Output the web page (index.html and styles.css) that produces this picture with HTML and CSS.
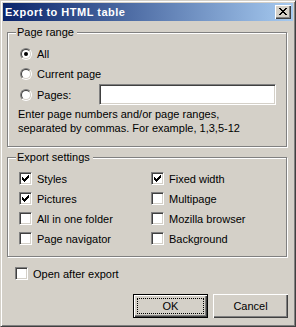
FILE: index.html
```
<!DOCTYPE html>
<html>
<head>
<meta charset="utf-8">
<link rel="stylesheet" href="styles.css">
</head>
<body>
<div class="window">
  <div class="titlebar">
    <span class="title">Export to HTML table</span>
    <span class="close-btn"><svg class="x-glyph" width="8" height="7" viewBox="0 0 8 7" shape-rendering="crispEdges"><path d="M0 0h2v1H0zM6 0h2v1H6zM1 1h2v1H1zM5 1h2v1H5zM2 2h4v1H2zM3 3h2v1H3zM2 4h4v1H2zM1 5h2v1H1zM5 5h2v1H5zM0 6h2v1H0zM6 6h2v1H6z"/></svg></span>
  </div>
  <div class="content">
    <fieldset class="group group-range">
      <legend>Page range</legend>
      <div class="range-body">
        <div class="opt"><span class="radio"><span class="ring"><span class="dot"></span></span></span><span>All</span></div>
        <div class="opt"><span class="radio"><span class="ring"></span></span><span>Current page</span></div>
        <div class="opt opt-pages"><span class="radio"><span class="ring"></span></span><span class="pages-label">Pages:</span><span class="input"></span></div>
        <p class="hint">Enter page numbers and/or page ranges,<br>separated by commas. For example, 1,3,5-12</p>
      </div>
    </fieldset>
    <fieldset class="group group-settings">
      <legend>Export settings</legend>
      <div class="settings-body">
        <div class="chk-item"><span class="check"><svg class="tick" width="9" height="9" viewBox="0 0 9 9" shape-rendering="crispEdges"><path d="M1 3h1v3H1zM2 4h1v3H2zM3 5h1v3H3zM4 4h1v3H4zM5 3h1v3H5zM6 2h1v3H6zM7 1h1v3H7z"/></svg></span><span>Styles</span></div>
        <div class="chk-item"><span class="check"><svg class="tick" width="9" height="9" viewBox="0 0 9 9" shape-rendering="crispEdges"><path d="M1 3h1v3H1zM2 4h1v3H2zM3 5h1v3H3zM4 4h1v3H4zM5 3h1v3H5zM6 2h1v3H6zM7 1h1v3H7z"/></svg></span><span>Fixed width</span></div>
        <div class="chk-item"><span class="check"><svg class="tick" width="9" height="9" viewBox="0 0 9 9" shape-rendering="crispEdges"><path d="M1 3h1v3H1zM2 4h1v3H2zM3 5h1v3H3zM4 4h1v3H4zM5 3h1v3H5zM6 2h1v3H6zM7 1h1v3H7z"/></svg></span><span>Pictures</span></div>
        <div class="chk-item"><span class="check"></span><span>Multipage</span></div>
        <div class="chk-item"><span class="check"></span><span>All in one folder</span></div>
        <div class="chk-item"><span class="check"></span><span>Mozilla browser</span></div>
        <div class="chk-item"><span class="check"></span><span>Page navigator</span></div>
        <div class="chk-item"><span class="check"></span><span>Background</span></div>
      </div>
    </fieldset>
    <div class="chk-item open-row"><span class="check"></span><span>Open after export</span></div>
    <div class="buttons">
      <button class="btn btn-default"><span class="focus">OK</span></button>
      <button class="btn">Cancel</button>
    </div>
  </div>
</div>
</body>
</html>
```
FILE: styles.css
```
html, body {
  margin: 0;
  padding: 0;
  background: #d4d0c8;
}
body {
  font-family: "Liberation Sans", Arial, sans-serif;
  font-size: 11px;
  color: #000;
}
.window {
  width: 296px;
  height: 327px;
  box-sizing: border-box;
  background: #d4d0c8;
  border: 1px solid;
  border-color: #d4d0c8 #404040 #404040 #d4d0c8;
  box-shadow: inset 1px 1px #fff, inset -1px -1px #808080;
  padding: 2px;
  display: flex;
  flex-direction: column;
}
.titlebar {
  height: 18px;
  flex: none;
  background: linear-gradient(to right, #0a246a, #a6caf0);
  display: flex;
  align-items: center;
  padding: 0 2px;
}
.title {
  flex: 1;
  color: #fff;
  font-weight: bold;
  letter-spacing: 0.5px;
  line-height: 18px;
  white-space: nowrap;
}
.close-btn {
  width: 16px;
  height: 14px;
  box-sizing: border-box;
  background: #d4d0c8;
  box-shadow: inset 1px 1px #fff, inset -1px -1px #404040, inset -2px -2px #808080;
  padding: 3px 0 0 4px;
}
.x-glyph {
  display: block;
  fill: #000;
}
.content {
  flex: 1;
  display: flex;
  flex-direction: column;
  padding: 0 5px 0 4px;
}
.group {
  margin: 5px 1px 0 0;
  padding: 0;
  min-width: 0;
  border: 1px solid #808080;
  box-shadow: inset 1px 1px #fff, 1px 1px #fff;
}
.group-settings {
  margin-top: 4px;
}
legend {
  margin-left: 8px;
  padding: 0 3px 0 1px;
  line-height: 13px;
  background: #d4d0c8;
}
.range-body {
  padding: 5px 0 11px 12px;
}
.opt {
  display: flex;
  align-items: center;
  height: 20px;
}
.opt-pages {
  height: 21px;
}
.radio {
  width: 12px;
  height: 12px;
  box-sizing: border-box;
  flex: none;
  border-radius: 50%;
  border: 1px solid;
  border-color: #808080 #fff #fff #808080;
  margin-right: 5px;
}
.ring {
  display: flex;
  align-items: center;
  justify-content: center;
  width: 100%;
  height: 100%;
  box-sizing: border-box;
  border-radius: 50%;
  border: 1px solid;
  border-color: #404040 #d4d0c8 #d4d0c8 #404040;
  background: #fff;
}
.dot {
  width: 4px;
  height: 4px;
  border-radius: 50%;
  background: #000;
}
.pages-label {
  width: 62px;
}
.input {
  width: 177px;
  height: 21px;
  box-sizing: border-box;
  background: #fff;
  border: 1px solid;
  border-color: #808080 #fff #fff #808080;
  box-shadow: inset 1px 1px #404040, inset -1px -1px #d4d0c8;
}
.hint {
  margin: 2px 0 0 -2px;
  line-height: 14px;
}
.settings-body {
  padding: 8px 0 11px 11px;
  display: grid;
  grid-template-columns: 132px 1fr;
  row-gap: 7px;
}
.chk-item {
  display: flex;
  align-items: center;
  height: 13px;
  white-space: nowrap;
}
.check {
  width: 13px;
  height: 13px;
  box-sizing: border-box;
  flex: none;
  background: #fff;
  border: 1px solid;
  border-color: #808080 #fff #fff #808080;
  box-shadow: inset 1px 1px #404040, inset -1px -1px #d4d0c8;
  padding: 1px;
  margin-right: 5px;
}
.tick {
  display: block;
  fill: #000;
}
.open-row {
  margin: 10px 0 0 8px;
}
.buttons {
  display: flex;
  justify-content: flex-end;
  gap: 5px;
  margin-top: 14px;
}
.btn {
  width: 75px;
  height: 24px;
  box-sizing: border-box;
  margin: 0;
  padding: 0;
  font: inherit;
  color: #000;
  background: #d4d0c8;
  border: none;
  box-shadow: inset 1px 1px #fff, inset -1px -1px #404040, inset -2px -2px #808080;
}
.btn-default {
  border: 1px solid #000;
  padding: 3px;
}
.focus {
  display: flex;
  align-items: center;
  justify-content: center;
  height: 100%;
  box-sizing: border-box;
  border: 1px dotted #000;
}
```
